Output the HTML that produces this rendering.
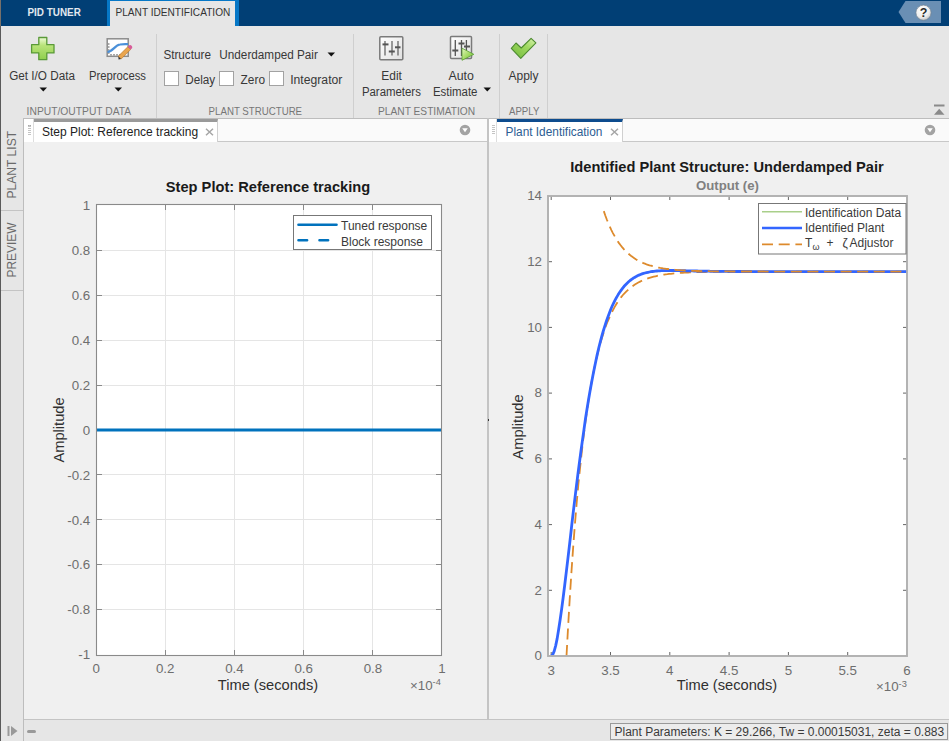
<!DOCTYPE html>
<html><head><meta charset="utf-8"><style>
*{margin:0;padding:0;box-sizing:border-box}
html,body{width:949px;height:741px;overflow:hidden;background:#f0f0f0;font-family:"Liberation Sans", sans-serif;}
.a{position:absolute;}
.t{position:absolute;white-space:nowrap;color:#222;}
svg text{font-family:"Liberation Sans", sans-serif;}
.tk{font-size:13.33px;fill:#6e6e6e;}
.lb{font-size:14.67px;fill:#303030;}
.ti{font-size:14.67px;font-weight:bold;fill:#1a1a1a;}
.sub{font-size:13.2px;font-weight:bold;fill:#808080;}
.lg{font-size:12px;fill:#3a3a3a;}
</style></head><body>
<!-- top bar -->
<div class="a" style="left:0;top:0;width:949px;height:26px;background:#013f75"></div>
<div class="a" style="left:107px;top:0;width:132px;height:26px;background:#0677c6"></div>
<div class="a" style="left:110px;top:1px;width:125px;height:26px;background:#e6e6e6"></div>
<!-- help -->
<svg class="a" style="left:895px;top:0" width="54" height="26"><polygon points="3.5,12 10.5,1 46,1 46,23 10.5,23" fill="#6a8fb4"/><defs><radialGradient id="gh" cx="0.4" cy="0.3" r="0.8"><stop offset="0" stop-color="#ffffff"/><stop offset="0.6" stop-color="#eeeeee"/><stop offset="1" stop-color="#b8b8b8"/></radialGradient></defs><circle cx="28.5" cy="12.7" r="7.6" fill="url(#gh)" stroke="#6d7f90" stroke-width="0.7"/><text x="28.5" y="17.3" text-anchor="middle" font-size="12.5" font-weight="bold" fill="#2a2a2a" font-family="Liberation Sans">?</text></svg>
<!-- toolbar -->
<div class="a" style="left:0;top:26px;width:949px;height:92px;background:#e6e6e6"></div>
<div class="a" style="left:0;top:118px;width:949px;height:1px;background:#bdbdbd"></div>
<div class="a" style="left:156px;top:34px;width:1px;height:84px;background:#cfcfcf"></div>
<div class="a" style="left:353px;top:34px;width:1px;height:84px;background:#cfcfcf"></div>
<div class="a" style="left:499px;top:34px;width:1px;height:84px;background:#cfcfcf"></div>
<div class="a" style="left:547px;top:34px;width:1px;height:84px;background:#cfcfcf"></div>
<!-- left border -->
<div class="a" style="left:0;top:0;width:1px;height:26px;background:#77706a"></div><div class="a" style="left:0;top:26px;width:1px;height:715px;background:#5a5a5a"></div>

<!-- toolbar items -->
<svg class="a" style="left:30px;top:36px" width="26" height="25"><defs><linearGradient id="gp" x1="0" y1="0" x2="0" y2="1"><stop offset="0" stop-color="#eefbd8"/><stop offset="0.35" stop-color="#b9e37a"/><stop offset="1" stop-color="#8fcf4c"/></linearGradient></defs><path d="M8.8,1.5h8v7.2h7.2v8.2h-7.2v6.8h-8v-6.8h-7.2v-8.2h7.2z" fill="url(#gp)" stroke="#5a9a38" stroke-width="1.3" stroke-linejoin="round"/></svg>
<svg class="a" style="left:39px;top:87px" width="9" height="6"><polygon points="0.5,0.5 8,0.5 4.25,4.5" fill="#111"/></svg>
<svg class="a" style="left:105px;top:37px" width="28" height="24"><rect x="2.2" y="1.8" width="21" height="17.5" fill="#fff" stroke="#8c8c8c" stroke-width="1.5"/><path d="M3,7 h1.5 M3,10 h1.5 M3,13 h1.5 M3,16 h1.5 M6,18.5 v-1.5 M9,18.5 v-1.5 M12,18.5 v-1.5 M15,18.5 v-1.5" stroke="#555" stroke-width="1"/><path d="M2.5,15 C8,14.5 10,8 15,7.5 C18,7 21,7.2 23,7.2" fill="none" stroke="#4a90d9" stroke-width="2.2"/><path d="M13.2,19.3 L22.8,9.8 L25.6,12.6 L16,22.1 Z" fill="#eaa54e" stroke="#b97a2e" stroke-width="0.7"/><path d="M13.2,19.3 L16,22.1 L13.6,22.6 Z" fill="#333"/><path d="M22.8,9.8 L24.3,8.3 Q25.5,7.5 26.6,8.8 L27.2,9.8 Q27.5,11 26.8,11.4 L25.6,12.6 Z" fill="#d85c9a"/></svg>
<svg class="a" style="left:114px;top:87px" width="9" height="6"><polygon points="0.5,0.5 8,0.5 4.25,4.5" fill="#111"/></svg>

<svg class="a" style="left:326.5px;top:52px" width="9" height="6"><polygon points="0.5,0.5 8,0.5 4.25,4.5" fill="#111"/></svg>
<div class="a" style="left:164px;top:71px;width:15px;height:15px;background:#fff;border:1px solid #a2a2a2"></div>
<div class="a" style="left:219px;top:71px;width:15px;height:15px;background:#fff;border:1px solid #a2a2a2"></div>
<div class="a" style="left:268.5px;top:71px;width:15px;height:15px;background:#fff;border:1px solid #a2a2a2"></div>

<svg class="a" style="left:378px;top:35px" width="27" height="27"><defs><linearGradient id="gw" x1="0" y1="0" x2="1" y2="1"><stop offset="0" stop-color="#fff"/><stop offset="1" stop-color="#e0e0e0"/></linearGradient></defs><rect x="1.8" y="1.8" width="23" height="23" rx="1" fill="url(#gw)" stroke="#7a7a7a" stroke-width="1.5"/><g stroke="#666" stroke-width="1.3"><line x1="7" y1="6" x2="7" y2="20.5"/><line x1="14" y1="6" x2="14" y2="20.5"/><line x1="20" y1="6" x2="20" y2="20.5"/></g><g stroke="#555" stroke-width="2"><line x1="4.5" y1="9.4" x2="10.5" y2="9.4"/><line x1="10.8" y1="16.5" x2="16.8" y2="16.5"/><line x1="17" y1="12.3" x2="22.5" y2="12.3"/></g></svg>

<svg class="a" style="left:449px;top:35px" width="27" height="27"><rect x="1.5" y="1.5" width="21" height="22" rx="1" fill="url(#gw)" stroke="#7a7a7a" stroke-width="1.5"/><g stroke="#555" stroke-width="1.3"><line x1="6.3" y1="5" x2="6.3" y2="21"/><line x1="12.5" y1="5" x2="12.5" y2="21"/><line x1="17.4" y1="5" x2="17.4" y2="21"/></g><g stroke="#555" stroke-width="2"><line x1="3.3" y1="15.5" x2="9.3" y2="15.5"/><line x1="9.5" y1="8.5" x2="15.5" y2="8.5"/><line x1="15" y1="11.5" x2="21" y2="11.5"/></g><defs><linearGradient id="gt" x1="0" y1="0" x2="1" y2="1"><stop offset="0" stop-color="#e4f7c4"/><stop offset="0.5" stop-color="#a6dc66"/><stop offset="1" stop-color="#6cbb3a"/></linearGradient></defs><polygon points="13,13.2 24.8,19.3 13,25.3" fill="url(#gt)" stroke="#5a9e35" stroke-width="0.8" stroke-linejoin="round"/></svg>
<svg class="a" style="left:483px;top:87px" width="9" height="6"><polygon points="0.5,0.5 8,0.5 4.25,4.5" fill="#111"/></svg>

<svg class="a" style="left:509px;top:36px" width="29" height="25"><defs><linearGradient id="gc" x1="0" y1="1" x2="1" y2="0"><stop offset="0" stop-color="#6fb83a"/><stop offset="0.6" stop-color="#9fd860"/><stop offset="1" stop-color="#d9f3b0"/></linearGradient></defs><polygon points="2.3,12.4 7,7 12.2,12 22.1,2.3 26.9,6.8 11.8,22.3" fill="url(#gc)" stroke="#4c8a30" stroke-width="1.1" stroke-linejoin="round"/></svg>

<svg class="a" style="left:933px;top:103px" width="12" height="13"><rect x="1" y="1.5" width="10.5" height="2" fill="#8a8a8a"/><polygon points="1,11.7 6.2,5.7 11.5,11.7" fill="#8a8a8a"/></svg>

<svg class="a" style="left:0;top:0" width="949" height="118">
<text x="27.5" y="16" font-size="11.3" font-weight="bold" fill="#e3e9f0" textLength="53.3" lengthAdjust="spacingAndGlyphs">PID TUNER</text>
<text x="115.5" y="16" font-size="11" fill="#333" textLength="114.8" lengthAdjust="spacingAndGlyphs">PLANT IDENTIFICATION</text>
<text x="9.2" y="80" font-size="12" fill="#383838" textLength="65.8" lengthAdjust="spacingAndGlyphs">Get I/O Data</text>
<text x="89" y="80" font-size="12" fill="#383838" textLength="57" lengthAdjust="spacingAndGlyphs">Preprocess</text>
<text x="163.4" y="58.5" font-size="12" fill="#383838" textLength="47.5" lengthAdjust="spacingAndGlyphs">Structure</text>
<text x="219.3" y="58.5" font-size="12" fill="#383838" textLength="98.6" lengthAdjust="spacingAndGlyphs">Underdamped Pair</text>
<text x="185.3" y="83.7" font-size="12" fill="#383838" textLength="29.9" lengthAdjust="spacingAndGlyphs">Delay</text>
<text x="240.6" y="83.7" font-size="12" fill="#383838" textLength="24.4" lengthAdjust="spacingAndGlyphs">Zero</text>
<text x="290.2" y="83.7" font-size="12" fill="#383838" textLength="52.2" lengthAdjust="spacingAndGlyphs">Integrator</text>
<text x="381.3" y="80" font-size="12" fill="#383838" textLength="20.6" lengthAdjust="spacingAndGlyphs">Edit</text>
<text x="361.9" y="96" font-size="12" fill="#383838" textLength="59" lengthAdjust="spacingAndGlyphs">Parameters</text>
<text x="448.4" y="80" font-size="12" fill="#383838" textLength="25.4" lengthAdjust="spacingAndGlyphs">Auto</text>
<text x="432.9" y="96" font-size="12" fill="#383838" textLength="44.6" lengthAdjust="spacingAndGlyphs">Estimate</text>
<text x="508.5" y="80" font-size="12" fill="#383838" textLength="30" lengthAdjust="spacingAndGlyphs">Apply</text>
<text x="26.6" y="115.2" font-size="10.5" fill="#767676" textLength="104.6" lengthAdjust="spacingAndGlyphs">INPUT/OUTPUT DATA</text>
<text x="208.6" y="115.2" font-size="10.5" fill="#767676" textLength="93.5" lengthAdjust="spacingAndGlyphs">PLANT STRUCTURE</text>
<text x="378" y="115.2" font-size="10.5" fill="#767676" textLength="97.1" lengthAdjust="spacingAndGlyphs">PLANT ESTIMATION</text>
<text x="509" y="115.2" font-size="10.5" fill="#767676" textLength="30.3" lengthAdjust="spacingAndGlyphs">APPLY</text>
</svg>
<!-- side strip -->
<div class="a" style="left:1px;top:118px;width:23px;height:623px;background:#e6e6e6;border-right:1px solid #bdbdbd"></div>
<div class="a" style="left:1px;top:209.5px;width:22px;height:1px;background:#c4c4c4"></div>
<div class="a" style="left:1px;top:289.5px;width:22px;height:1px;background:#c4c4c4"></div>
<div class="t" style="left:-22px;top:158px;width:67px;font-size:12.1px;color:#6a6a6a;transform:rotate(-90deg);transform-origin:33.5px 7px;text-align:center">PLANT LIST</div>
<div class="t" style="left:-16px;top:243px;width:55px;font-size:11.9px;color:#6a6a6a;transform:rotate(-90deg);transform-origin:27.5px 7px;text-align:center">PREVIEW</div>

<!-- left panel tabstrip -->
<div class="a" style="left:24px;top:118.5px;width:463px;height:23.5px;background:#fafafa;border-bottom:1px solid #c8c8c8"></div>
<div class="a" style="left:24px;top:118.5px;width:10px;height:23px;background:#fff;border-right:1px solid #ddd"></div>
<div class="a" style="left:27.5px;top:125px;width:3px;height:10px;border-top:1px dotted #aaa;background:repeating-linear-gradient(#c4c4c4 0 1px,transparent 1px 2px)"></div>
<div class="a" style="left:34px;top:118.5px;width:183.5px;height:23px;background:#fff;border-top:3px solid #9a9a9a;border-right:1px solid #d0d0d0"></div>
<div class="t" style="left:42px;top:124.5px;font-size:12px;color:#222">Step Plot: Reference tracking</div>
<svg class="a" style="left:205px;top:128px" width="9" height="8"><path d="M1,0.8 L8,7.2 M8,0.8 L1,7.2" stroke="#a6a6a6" stroke-width="1.5"/></svg>
<svg class="a" style="left:459px;top:124px" width="12" height="12"><circle cx="6" cy="6" r="5.3" fill="#a3a3a3"/><polygon points="3.2,4.3 8.8,4.3 6,8.3" fill="#fff"/></svg>

<!-- divider -->
<div class="a" style="left:487px;top:118px;width:1.5px;height:601px;background:#c4c4c4"></div><div class="a" style="left:488px;top:419px;width:1px;height:1.5px;background:#333"></div>

<!-- right panel tabstrip -->
<div class="a" style="left:488.5px;top:118.5px;width:461px;height:23.5px;background:#fafafa;border-bottom:1px solid #c8c8c8"></div>
<div class="a" style="left:489px;top:118.5px;width:8px;height:23px;background:#fff;border-right:1px solid #ddd"></div>
<div class="a" style="left:491.5px;top:125px;width:3px;height:10px;background:repeating-linear-gradient(#c4c4c4 0 1px,transparent 1px 2px)"></div>
<div class="a" style="left:497px;top:118.5px;width:126px;height:23px;background:#fff;border-top:3px solid #0e4c8e;border-right:1px solid #d0d0d0"></div>
<div class="t" style="left:505.5px;top:124.5px;font-size:11.87px;color:#2c5d93">Plant Identification</div>
<svg class="a" style="left:610px;top:128px" width="9" height="8"><path d="M1,0.8 L8,7.2 M8,0.8 L1,7.2" stroke="#a6a6a6" stroke-width="1.5"/></svg>
<svg class="a" style="left:924px;top:124px" width="12" height="12"><circle cx="6" cy="6" r="5.3" fill="#a3a3a3"/><polygon points="3.2,4.3 8.8,4.3 6,8.3" fill="#fff"/></svg>

<!-- plots -->
<svg class="a" style="left:0;top:0" width="949" height="741">
<rect x="96" y="204" width="346" height="452" fill="#fff"/>
<line x1="165.5" y1="205" x2="165.5" y2="655" stroke="#e5e5e5" stroke-width="1"/>
<line x1="234.5" y1="205" x2="234.5" y2="655" stroke="#e5e5e5" stroke-width="1"/>
<line x1="303.5" y1="205" x2="303.5" y2="655" stroke="#e5e5e5" stroke-width="1"/>
<line x1="372.5" y1="205" x2="372.5" y2="655" stroke="#e5e5e5" stroke-width="1"/>
<line x1="97" y1="250.5" x2="441" y2="250.5" stroke="#e5e5e5" stroke-width="1"/>
<line x1="97" y1="295.5" x2="441" y2="295.5" stroke="#e5e5e5" stroke-width="1"/>
<line x1="97" y1="340.5" x2="441" y2="340.5" stroke="#e5e5e5" stroke-width="1"/>
<line x1="97" y1="385.5" x2="441" y2="385.5" stroke="#e5e5e5" stroke-width="1"/>
<line x1="97" y1="430" x2="441" y2="430" stroke="#e5e5e5" stroke-width="1"/>
<line x1="97" y1="474.5" x2="441" y2="474.5" stroke="#e5e5e5" stroke-width="1"/>
<line x1="97" y1="519.5" x2="441" y2="519.5" stroke="#e5e5e5" stroke-width="1"/>
<line x1="97" y1="564.5" x2="441" y2="564.5" stroke="#e5e5e5" stroke-width="1"/>
<line x1="97" y1="609.5" x2="441" y2="609.5" stroke="#e5e5e5" stroke-width="1"/>
<line x1="165.5" y1="655" x2="165.5" y2="650" stroke="#8a8a8a" stroke-width="1"/>
<line x1="165.5" y1="205" x2="165.5" y2="210" stroke="#8a8a8a" stroke-width="1"/>
<line x1="234.5" y1="655" x2="234.5" y2="650" stroke="#8a8a8a" stroke-width="1"/>
<line x1="234.5" y1="205" x2="234.5" y2="210" stroke="#8a8a8a" stroke-width="1"/>
<line x1="303.5" y1="655" x2="303.5" y2="650" stroke="#8a8a8a" stroke-width="1"/>
<line x1="303.5" y1="205" x2="303.5" y2="210" stroke="#8a8a8a" stroke-width="1"/>
<line x1="372.5" y1="655" x2="372.5" y2="650" stroke="#8a8a8a" stroke-width="1"/>
<line x1="372.5" y1="205" x2="372.5" y2="210" stroke="#8a8a8a" stroke-width="1"/>
<line x1="97" y1="250.5" x2="102" y2="250.5" stroke="#8a8a8a" stroke-width="1"/>
<line x1="441" y1="250.5" x2="436" y2="250.5" stroke="#8a8a8a" stroke-width="1"/>
<line x1="97" y1="295.5" x2="102" y2="295.5" stroke="#8a8a8a" stroke-width="1"/>
<line x1="441" y1="295.5" x2="436" y2="295.5" stroke="#8a8a8a" stroke-width="1"/>
<line x1="97" y1="340.5" x2="102" y2="340.5" stroke="#8a8a8a" stroke-width="1"/>
<line x1="441" y1="340.5" x2="436" y2="340.5" stroke="#8a8a8a" stroke-width="1"/>
<line x1="97" y1="385.5" x2="102" y2="385.5" stroke="#8a8a8a" stroke-width="1"/>
<line x1="441" y1="385.5" x2="436" y2="385.5" stroke="#8a8a8a" stroke-width="1"/>
<line x1="97" y1="430" x2="102" y2="430" stroke="#8a8a8a" stroke-width="1"/>
<line x1="441" y1="430" x2="436" y2="430" stroke="#8a8a8a" stroke-width="1"/>
<line x1="97" y1="474.5" x2="102" y2="474.5" stroke="#8a8a8a" stroke-width="1"/>
<line x1="441" y1="474.5" x2="436" y2="474.5" stroke="#8a8a8a" stroke-width="1"/>
<line x1="97" y1="519.5" x2="102" y2="519.5" stroke="#8a8a8a" stroke-width="1"/>
<line x1="441" y1="519.5" x2="436" y2="519.5" stroke="#8a8a8a" stroke-width="1"/>
<line x1="97" y1="564.5" x2="102" y2="564.5" stroke="#8a8a8a" stroke-width="1"/>
<line x1="441" y1="564.5" x2="436" y2="564.5" stroke="#8a8a8a" stroke-width="1"/>
<line x1="97" y1="609.5" x2="102" y2="609.5" stroke="#8a8a8a" stroke-width="1"/>
<line x1="441" y1="609.5" x2="436" y2="609.5" stroke="#8a8a8a" stroke-width="1"/>
<line x1="96.5" y1="430" x2="441.5" y2="430" stroke="#0072bd" stroke-width="2.8"/>
<rect x="96.5" y="204.5" width="345" height="451" fill="none" stroke="#8a8a8a" stroke-width="1.1"/>
<text x="96.3" y="673" text-anchor="middle" class="tk">0</text>
<text x="165.2" y="673" text-anchor="middle" class="tk">0.2</text>
<text x="234.4" y="673" text-anchor="middle" class="tk">0.4</text>
<text x="303.7" y="673" text-anchor="middle" class="tk">0.6</text>
<text x="372.9" y="673" text-anchor="middle" class="tk">0.8</text>
<text x="442.0" y="673" text-anchor="middle" class="tk">1</text>
<text x="90.2" y="210.2" text-anchor="end" class="tk">1</text>
<text x="90.2" y="255.1" text-anchor="end" class="tk">0.8</text>
<text x="90.2" y="300.0" text-anchor="end" class="tk">0.6</text>
<text x="90.2" y="344.9" text-anchor="end" class="tk">0.4</text>
<text x="90.2" y="389.8" text-anchor="end" class="tk">0.2</text>
<text x="90.2" y="434.7" text-anchor="end" class="tk">0</text>
<text x="90.2" y="479.6" text-anchor="end" class="tk">-0.2</text>
<text x="90.2" y="524.5" text-anchor="end" class="tk">-0.4</text>
<text x="90.2" y="569.4" text-anchor="end" class="tk">-0.6</text>
<text x="90.2" y="614.3" text-anchor="end" class="tk">-0.8</text>
<text x="90.2" y="659.2" text-anchor="end" class="tk">-1</text>
<text x="410" y="689.5" class="tk">&#215;10<tspan dy="-4.5" font-size="9.3">-4</tspan></text>
<rect x="293.5" y="215.5" width="138" height="34" fill="#fff" stroke="#777" stroke-width="1"/>
<line x1="298.5" y1="224.8" x2="336.5" y2="224.8" stroke="#0072bd" stroke-width="2.6" stroke-linecap="round"/>
<line x1="298.5" y1="240.2" x2="336.5" y2="240.2" stroke="#0072bd" stroke-width="2.6" stroke-linecap="round" stroke-dasharray="8.6 12.4"/>
<text x="341" y="230" class="lg">Tuned response</text>
<text x="341" y="246" class="lg">Block response</text>
<text x="268" y="192.3" text-anchor="middle" class="ti">Step Plot: Reference tracking</text>
<text x="268" y="689.5" text-anchor="middle" class="lb">Time (seconds)</text>
<text transform="translate(64,430) rotate(-90)" text-anchor="middle" class="lb">Amplitude</text>
<rect x="548.0" y="196.0" width="359.0" height="460.0" fill="#fff"/>
<line x1="551.2" y1="656.0" x2="551.2" y2="652.0" stroke="#666" stroke-width="1"/>
<line x1="551.2" y1="196.0" x2="551.2" y2="200.0" stroke="#666" stroke-width="1"/>
<line x1="610.5" y1="656.0" x2="610.5" y2="652.0" stroke="#666" stroke-width="1"/>
<line x1="610.5" y1="196.0" x2="610.5" y2="200.0" stroke="#666" stroke-width="1"/>
<line x1="669.8" y1="656.0" x2="669.8" y2="652.0" stroke="#666" stroke-width="1"/>
<line x1="669.8" y1="196.0" x2="669.8" y2="200.0" stroke="#666" stroke-width="1"/>
<line x1="729.1" y1="656.0" x2="729.1" y2="652.0" stroke="#666" stroke-width="1"/>
<line x1="729.1" y1="196.0" x2="729.1" y2="200.0" stroke="#666" stroke-width="1"/>
<line x1="788.4" y1="656.0" x2="788.4" y2="652.0" stroke="#666" stroke-width="1"/>
<line x1="788.4" y1="196.0" x2="788.4" y2="200.0" stroke="#666" stroke-width="1"/>
<line x1="847.7" y1="656.0" x2="847.7" y2="652.0" stroke="#666" stroke-width="1"/>
<line x1="847.7" y1="196.0" x2="847.7" y2="200.0" stroke="#666" stroke-width="1"/>
<line x1="548.0" y1="590.3" x2="552.0" y2="590.3" stroke="#666" stroke-width="1"/>
<line x1="907.0" y1="590.3" x2="903.0" y2="590.3" stroke="#666" stroke-width="1"/>
<line x1="548.0" y1="524.6" x2="552.0" y2="524.6" stroke="#666" stroke-width="1"/>
<line x1="907.0" y1="524.6" x2="903.0" y2="524.6" stroke="#666" stroke-width="1"/>
<line x1="548.0" y1="458.9" x2="552.0" y2="458.9" stroke="#666" stroke-width="1"/>
<line x1="907.0" y1="458.9" x2="903.0" y2="458.9" stroke="#666" stroke-width="1"/>
<line x1="548.0" y1="393.1" x2="552.0" y2="393.1" stroke="#666" stroke-width="1"/>
<line x1="907.0" y1="393.1" x2="903.0" y2="393.1" stroke="#666" stroke-width="1"/>
<line x1="548.0" y1="327.4" x2="552.0" y2="327.4" stroke="#666" stroke-width="1"/>
<line x1="907.0" y1="327.4" x2="903.0" y2="327.4" stroke="#666" stroke-width="1"/>
<line x1="548.0" y1="261.7" x2="552.0" y2="261.7" stroke="#666" stroke-width="1"/>
<line x1="907.0" y1="261.7" x2="903.0" y2="261.7" stroke="#666" stroke-width="1"/>
<path d="M566.5,656.0 L568.2,624.8 L569.9,596.1 L571.6,569.7 L573.3,545.5 L575.0,523.2 L576.7,502.8 L578.4,484.0 L580.2,466.7 L581.9,450.8 L583.6,436.3 L585.3,422.9 L587.0,410.6 L588.7,399.3 L590.4,388.9 L592.1,379.4 L593.8,370.6 L595.6,362.6 L597.3,355.2 L599.0,348.4 L600.7,342.1 L602.4,336.4 L604.1,331.1 L605.8,326.3 L607.5,321.8 L609.3,317.8 L611.0,314.0 L612.7,310.6 L614.4,307.4 L616.1,304.5 L617.8,301.8 L619.5,299.3 L621.2,297.1 L622.9,295.0 L624.7,293.1 L626.4,291.4 L628.1,289.8 L629.8,288.3 L631.5,286.9 L633.2,285.7 L634.9,284.5 L636.6,283.5 L638.3,282.5 L640.1,281.6 L641.8,280.8 L643.5,280.1 L645.2,279.4 L646.9,278.7 L648.6,278.1 L650.3,277.6 L652.0,277.1 L653.7,276.7 L655.5,276.3 L657.2,275.9 L658.9,275.5 L660.6,275.2 L662.3,274.9 L664.0,274.6 L665.7,274.4 L667.4,274.2 L669.1,273.9 L670.9,273.8 L672.6,273.6 L674.3,273.4 L676.0,273.3 L677.7,273.1 L679.4,273.0 L681.1,272.9 L682.8,272.8 L684.5,272.7 L686.3,272.6 L688.0,272.5 L689.7,272.4 L691.4,272.4 L693.1,272.3 L694.8,272.2 L696.5,272.2 L698.2,272.1 L699.9,272.1 L701.7,272.0 L703.4,272.0 L705.1,272.0 L706.8,271.9 L708.5,271.9 L710.2,271.9 L711.9,271.9 L713.6,271.8 L715.3,271.8 L717.1,271.8 L718.8,271.8 L720.5,271.8 L722.2,271.7 L723.9,271.7 L725.6,271.7 L727.3,271.7 L729.0,271.7 L730.7,271.7 L732.5,271.7 L734.2,271.7 L735.9,271.7 L737.6,271.7 L739.3,271.6 L741.0,271.6 L742.7,271.6 L744.4,271.6 L746.1,271.6 L747.9,271.6 L749.6,271.6 L751.3,271.6 L753.0,271.6 L754.7,271.6 L756.4,271.6 L758.1,271.6 L759.8,271.6 L761.5,271.6 L763.3,271.6 L765.0,271.6 L766.7,271.6 L768.4,271.6 L770.1,271.6 L771.8,271.6 L773.5,271.6 L775.2,271.6 L776.9,271.6 L778.7,271.6 L780.4,271.6 L782.1,271.6 L783.8,271.6 L785.5,271.6 L787.2,271.6 L788.9,271.6 L790.6,271.6 L792.3,271.6 L794.1,271.6 L795.8,271.6 L797.5,271.6 L799.2,271.6 L800.9,271.6 L802.6,271.6 L804.3,271.6 L806.0,271.6 L807.8,271.6 L809.5,271.6 L811.2,271.6 L812.9,271.6 L814.6,271.6 L816.3,271.6 L818.0,271.6 L819.7,271.6 L821.4,271.6 L823.2,271.6 L824.9,271.6 L826.6,271.6 L828.3,271.6 L830.0,271.6 L831.7,271.6 L833.4,271.6 L835.1,271.6 L836.8,271.6 L838.6,271.6 L840.3,271.6 L842.0,271.6 L843.7,271.6 L845.4,271.6 L847.1,271.6 L848.8,271.6 L850.5,271.6 L852.2,271.6 L854.0,271.6 L855.7,271.6 L857.4,271.6 L859.1,271.6 L860.8,271.6 L862.5,271.6 L864.2,271.6 L865.9,271.6 L867.6,271.6 L869.4,271.6 L871.1,271.6 L872.8,271.6 L874.5,271.6 L876.2,271.6 L877.9,271.6 L879.6,271.6 L881.3,271.6 L883.0,271.6 L884.8,271.6 L886.5,271.6 L888.2,271.6 L889.9,271.6 L891.6,271.6 L893.3,271.6 L895.0,271.6 L896.7,271.6 L898.4,271.6 L900.2,271.6 L901.9,271.6 L903.6,271.6 L905.3,271.6 L907.0,271.6" fill="none" stroke="#dd8a2c" stroke-width="1.8" stroke-dasharray="11 5.6"/>
<path d="M551.2,656.0 L552.7,654.7 L554.2,651.1 L555.7,645.6 L557.2,638.4 L558.6,629.8 L560.1,620.0 L561.6,609.4 L563.1,598.0 L564.6,586.0 L566.1,573.7 L567.6,561.1 L569.1,548.3 L570.6,535.5 L572.0,522.8 L573.5,510.1 L575.0,497.7 L576.5,485.5 L578.0,473.5 L579.5,462.0 L581.0,450.7 L582.5,439.9 L584.0,429.4 L585.4,419.3 L586.9,409.7 L588.4,400.5 L589.9,391.7 L591.4,383.4 L592.9,375.5 L594.4,367.9 L595.9,360.8 L597.3,354.1 L598.8,347.8 L600.3,341.8 L601.8,336.2 L603.3,331.0 L604.8,326.1 L606.3,321.5 L607.8,317.2 L609.3,313.2 L610.7,309.5 L612.2,306.0 L613.7,302.8 L615.2,299.9 L616.7,297.1 L618.2,294.6 L619.7,292.3 L621.2,290.1 L622.7,288.1 L624.1,286.3 L625.6,284.7 L627.1,283.2 L628.6,281.8 L630.1,280.5 L631.6,279.4 L633.1,278.3 L634.6,277.4 L636.1,276.6 L637.5,275.8 L639.0,275.1 L640.5,274.5 L642.0,273.9 L643.5,273.4 L645.0,273.0 L646.5,272.6 L648.0,272.3 L649.5,272.0 L650.9,271.7 L652.4,271.5 L653.9,271.3 L655.4,271.1 L656.9,271.0 L658.4,270.9 L659.9,270.8 L661.4,270.7 L662.9,270.7 L664.3,270.6 L665.8,270.6 L667.3,270.5 L668.8,270.5 L670.3,270.5 L671.8,270.5 L673.3,270.5 L674.8,270.6 L676.3,270.6 L677.7,270.6 L679.2,270.6 L680.7,270.7 L682.2,270.7 L683.7,270.7 L685.2,270.7 L686.7,270.8 L688.2,270.8 L689.6,270.9 L691.1,270.9 L692.6,270.9 L694.1,271.0 L695.6,271.0 L697.1,271.0 L698.6,271.1 L700.1,271.1 L701.6,271.1 L703.0,271.1 L704.5,271.2 L706.0,271.2 L707.5,271.2 L709.0,271.2 L710.5,271.3 L712.0,271.3 L713.5,271.3 L715.0,271.3 L716.4,271.3 L717.9,271.4 L719.4,271.4 L720.9,271.4 L722.4,271.4 L723.9,271.4 L725.4,271.4 L726.9,271.4 L728.4,271.5 L729.8,271.5 L731.3,271.5 L732.8,271.5 L734.3,271.5 L735.8,271.5 L737.3,271.5 L738.8,271.5 L740.3,271.5 L741.8,271.5 L743.2,271.5 L744.7,271.5 L746.2,271.5 L747.7,271.5 L749.2,271.5 L750.7,271.5 L752.2,271.6 L753.7,271.6 L755.2,271.6 L756.6,271.6 L758.1,271.6 L759.6,271.6 L761.1,271.6 L762.6,271.6 L764.1,271.6 L765.6,271.6 L767.1,271.6 L768.6,271.6 L770.0,271.6 L771.5,271.6 L773.0,271.6 L774.5,271.6 L776.0,271.6 L777.5,271.6 L779.0,271.6 L780.5,271.6 L781.9,271.6 L783.4,271.6 L784.9,271.6 L786.4,271.6 L787.9,271.6 L789.4,271.6 L790.9,271.6 L792.4,271.6 L793.9,271.6 L795.3,271.6 L796.8,271.6 L798.3,271.6 L799.8,271.6 L801.3,271.6 L802.8,271.6 L804.3,271.6 L805.8,271.6 L807.3,271.6 L808.7,271.6 L810.2,271.6 L811.7,271.6 L813.2,271.6 L814.7,271.6 L816.2,271.6 L817.7,271.6 L819.2,271.6 L820.7,271.6 L822.1,271.6 L823.6,271.6 L825.1,271.6 L826.6,271.6 L828.1,271.6 L829.6,271.6 L831.1,271.6 L832.6,271.6 L834.1,271.6 L835.5,271.6 L837.0,271.6 L838.5,271.6 L840.0,271.6 L841.5,271.6 L843.0,271.6 L844.5,271.6 L846.0,271.6 L847.5,271.6 L848.9,271.6 L850.4,271.6 L851.9,271.6 L853.4,271.6 L854.9,271.6 L856.4,271.6 L857.9,271.6 L859.4,271.6 L860.9,271.6 L862.3,271.6 L863.8,271.6 L865.3,271.6 L866.8,271.6 L868.3,271.6 L869.8,271.6 L871.3,271.6 L872.8,271.6 L874.2,271.6 L875.7,271.6 L877.2,271.6 L878.7,271.6 L880.2,271.6 L881.7,271.6 L883.2,271.6 L884.7,271.6 L886.2,271.6 L887.6,271.6 L889.1,271.6 L890.6,271.6 L892.1,271.6 L893.6,271.6 L895.1,271.6 L896.6,271.6 L898.1,271.6 L899.6,271.6 L901.0,271.6 L902.5,271.6 L904.0,271.6 L905.5,271.6 L907.0,271.6" fill="none" stroke="#3366ff" stroke-width="2.8" stroke-linejoin="round"/>
<path d="M603.8,211.1 L605.3,215.5 L606.8,219.5 L608.4,223.3 L609.9,226.8 L611.4,230.1 L612.9,233.1 L614.5,235.9 L616.0,238.5 L617.5,240.9 L619.0,243.1 L620.6,245.2 L622.1,247.1 L623.6,248.9 L625.1,250.5 L626.7,252.1 L628.2,253.5 L629.7,254.8 L631.2,256.0 L632.7,257.1 L634.3,258.2 L635.8,259.2 L637.3,260.1 L638.8,260.9 L640.4,261.7 L641.9,262.4 L643.4,263.1 L644.9,263.7 L646.5,264.3 L648.0,264.8 L649.5,265.3 L651.0,265.7 L652.6,266.2 L654.1,266.6 L655.6,266.9 L657.1,267.3 L658.6,267.6 L660.2,267.9 L661.7,268.1 L663.2,268.4 L664.7,268.6 L666.3,268.8 L667.8,269.0 L669.3,269.2 L670.8,269.4 L672.4,269.5 L673.9,269.7 L675.4,269.8 L676.9,270.0 L678.5,270.1 L680.0,270.2 L681.5,270.3 L683.0,270.4 L684.6,270.5 L686.1,270.5 L687.6,270.6 L689.1,270.7 L690.6,270.8 L692.2,270.8 L693.7,270.9 L695.2,270.9 L696.7,271.0 L698.3,271.0 L699.8,271.1 L701.3,271.1 L702.8,271.1 L704.4,271.2 L705.9,271.2 L707.4,271.2 L708.9,271.2 L710.5,271.3 L712.0,271.3 L713.5,271.3 L715.0,271.3 L716.5,271.3 L718.1,271.4 L719.6,271.4 L721.1,271.4 L722.6,271.4 L724.2,271.4 L725.7,271.4 L727.2,271.4 L728.7,271.4 L730.3,271.5 L731.8,271.5 L733.3,271.5 L734.8,271.5 L736.4,271.5 L737.9,271.5 L739.4,271.5 L740.9,271.5 L742.4,271.5 L744.0,271.5 L745.5,271.5 L747.0,271.5 L748.5,271.5 L750.1,271.5 L751.6,271.5 L753.1,271.5 L754.6,271.5 L756.2,271.5 L757.7,271.5 L759.2,271.5 L760.7,271.5 L762.3,271.5 L763.8,271.5 L765.3,271.6 L766.8,271.6 L768.4,271.6 L769.9,271.6 L771.4,271.6 L772.9,271.6 L774.4,271.6 L776.0,271.6 L777.5,271.6 L779.0,271.6 L780.5,271.6 L782.1,271.6 L783.6,271.6 L785.1,271.6 L786.6,271.6 L788.2,271.6 L789.7,271.6 L791.2,271.6 L792.7,271.6 L794.3,271.6 L795.8,271.6 L797.3,271.6 L798.8,271.6 L800.3,271.6 L801.9,271.6 L803.4,271.6 L804.9,271.6 L806.4,271.6 L808.0,271.6 L809.5,271.6 L811.0,271.6 L812.5,271.6 L814.1,271.6 L815.6,271.6 L817.1,271.6 L818.6,271.6 L820.2,271.6 L821.7,271.6 L823.2,271.6 L824.7,271.6 L826.2,271.6 L827.8,271.6 L829.3,271.6 L830.8,271.6 L832.3,271.6 L833.9,271.6 L835.4,271.6 L836.9,271.6 L838.4,271.6 L840.0,271.6 L841.5,271.6 L843.0,271.6 L844.5,271.6 L846.1,271.6 L847.6,271.6 L849.1,271.6 L850.6,271.6 L852.1,271.6 L853.7,271.6 L855.2,271.6 L856.7,271.6 L858.2,271.6 L859.8,271.6 L861.3,271.6 L862.8,271.6 L864.3,271.6 L865.9,271.6 L867.4,271.6 L868.9,271.6 L870.4,271.6 L872.0,271.6 L873.5,271.6 L875.0,271.6 L876.5,271.6 L878.1,271.6 L879.6,271.6 L881.1,271.6 L882.6,271.6 L884.1,271.6 L885.7,271.6 L887.2,271.6 L888.7,271.6 L890.2,271.6 L891.8,271.6 L893.3,271.6 L894.8,271.6 L896.3,271.6 L897.9,271.6 L899.4,271.6 L900.9,271.6 L902.4,271.6 L904.0,271.6 L905.5,271.6 L907.0,271.6" fill="none" stroke="#dd8a2c" stroke-width="1.8" stroke-dasharray="11 5.6"/>
<rect x="548.0" y="196.0" width="359.0" height="460.0" fill="none" stroke="#b0b0b0" stroke-width="1.9"/>
<text x="551.2" y="674.5" text-anchor="middle" class="tk">3</text>
<text x="610.5" y="674.5" text-anchor="middle" class="tk">3.5</text>
<text x="669.8" y="674.5" text-anchor="middle" class="tk">4</text>
<text x="729.1" y="674.5" text-anchor="middle" class="tk">4.5</text>
<text x="788.4" y="674.5" text-anchor="middle" class="tk">5</text>
<text x="847.7" y="674.5" text-anchor="middle" class="tk">5.5</text>
<text x="907.0" y="674.5" text-anchor="middle" class="tk">6</text>
<text x="542" y="660.2" text-anchor="end" class="tk">0</text>
<text x="542" y="594.5" text-anchor="end" class="tk">2</text>
<text x="542" y="528.8" text-anchor="end" class="tk">4</text>
<text x="542" y="463.1" text-anchor="end" class="tk">6</text>
<text x="542" y="397.3" text-anchor="end" class="tk">8</text>
<text x="542" y="331.6" text-anchor="end" class="tk">10</text>
<text x="542" y="265.9" text-anchor="end" class="tk">12</text>
<text x="542" y="200.2" text-anchor="end" class="tk">14</text>
<text x="876" y="691" class="tk">&#215;10<tspan dy="-4.5" font-size="9.3">-3</tspan></text>
<rect x="758.5" y="203.5" width="147.5" height="50.5" fill="#fff" stroke="#777" stroke-width="1"/>
<line x1="762" y1="211.7" x2="802" y2="211.7" stroke="#a9cf8a" stroke-width="1.5"/>
<line x1="762" y1="228" x2="802" y2="228" stroke="#3366ff" stroke-width="2.5"/>
<line x1="762" y1="244.4" x2="802" y2="244.4" stroke="#dd8a2c" stroke-width="1.8" stroke-dasharray="11 5.7"/>
<text x="805" y="217" class="lg">Identification Data</text>
<text x="805" y="232.3" class="lg">Identified Plant</text>
<text x="805" y="246.8" class="lg">T</text><text x="812.5" y="249.5" class="lg" style="font-size:9px">&#969;</text><text x="826.5" y="246.8" class="lg">+</text><text x="842.5" y="246.8" class="lg">&#950;</text><text x="849.5" y="246.8" class="lg">Adjustor</text>
<text x="727" y="171.5" text-anchor="middle" class="ti">Identified Plant Structure: Underdamped Pair</text>
<text x="727.5" y="189.5" text-anchor="middle" class="sub">Output (e)</text>
<text x="727" y="690" text-anchor="middle" class="lb">Time (seconds)</text>
<text transform="translate(522.5,427) rotate(-90)" text-anchor="middle" class="lb">Amplitude</text>
</svg>

<!-- status bar -->
<div class="a" style="left:24px;top:718.5px;width:925px;height:1px;background:#c4c4c4"></div>
<div class="a" style="left:24px;top:719.5px;width:925px;height:22px;background:#e6e6e6"></div>
<svg class="a" style="left:6px;top:725px" width="14" height="12"><rect x="1.5" y="1" width="2" height="10" fill="#999"/><polygon points="5,1 11.5,6 5,11" fill="#999"/></svg>
<div class="a" style="left:27px;top:729.5px;width:8.5px;height:3px;background:#999;border-radius:1.5px"></div>
<div class="a" style="left:610px;top:723px;width:337.5px;height:16.5px;border:1px solid #999;background:#ececec"></div>
<div class="t" style="left:614.5px;top:724.5px;font-size:12px;color:#3a3a3a">Plant Parameters: K = 29.266, Tw = 0.00015031, zeta = 0.883</div>
</body></html>
